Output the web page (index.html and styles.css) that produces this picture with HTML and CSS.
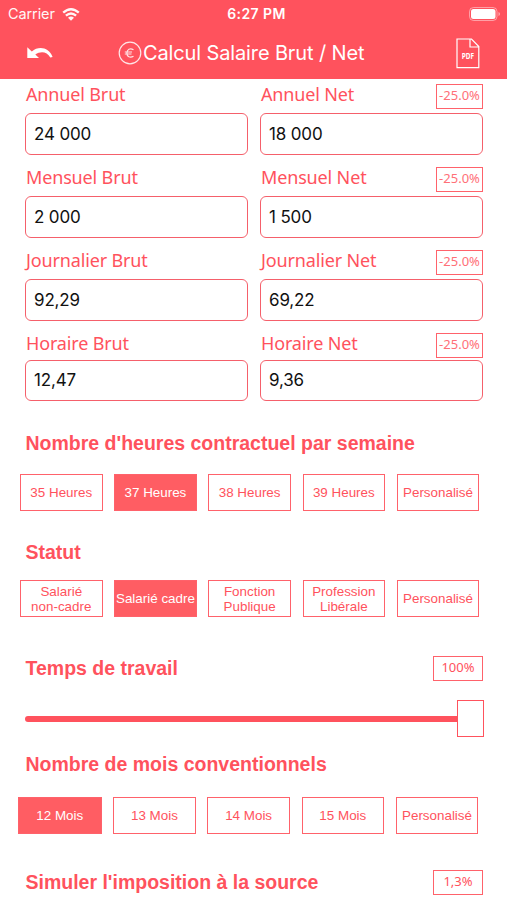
FILE: index.html
```html
<!DOCTYPE html>
<html lang="fr">
<head>
<meta charset="utf-8">
<title>Calcul Salaire Brut / Net</title>
<link rel="stylesheet" href="styles.css">
</head>
<body>
<header class="top">
  <div class="status">
    <span class="carrier">Carrier <svg class="wifi" width="18" height="13" viewBox="0 0 18 13" fill="none" stroke="#fff" stroke-width="2.3"><path d="M1.2 4.7Q9-2.3 16.8 4.7M3.9 7.7Q9 3.2 14.1 7.7"/><path d="M6 9.8Q9 7.4 12 9.8L9 12.8Z" fill="#fff" stroke="none"/></svg></span>
    <span class="time">6:27 PM</span>
    <svg class="battery" width="32" height="14" viewBox="0 0 32 14"><rect x=".5" y=".5" width="27.500" height="13" rx="4" fill="none" stroke="#fff" stroke-opacity=".45"/><rect x="2" y="2" width="24.500" height="10" rx="2.500" fill="#fff"/><path d="M29.500 5v4q1.500-.6 1.500-2t-1.500-2" fill="#fff" fill-opacity=".5"/></svg>
  </div>
  <div class="nav">
    <svg class="back" width="26" height="14" viewBox="0 0 26 14" fill="#fff"><path d="M.3 1.300V12H12L8.300 8.400C13.500 4.800 20 5.200 23.300 11.600L25.600 10.900C22 1.200 11.500-.3 4.800 5.500Z"/></svg>
    <h1 class="title"><svg width="24" height="24" viewBox="0 0 24 24" fill="none" stroke="#fff" stroke-opacity=".85"><circle cx="12" cy="12" r="10.800" stroke-width="1.200"/><path d="M15.500 8.700C12 6.700 9 8.300 8.900 12S12 17.300 15.500 15.300M6.800 11H14M6.800 13H13.500" stroke-width="1.200"/></svg><span>Calcul Salaire Brut / Net</span></h1>
    <svg class="pdf" width="24" height="31" viewBox="0 0 24 31" fill="none" stroke="#fff" stroke-width="1.200"><path d="M1 1H15.500L22.800 8.500V29.700H1ZM14 1V9H22.800"/><text x="5.700" y="21.300" class="pdf-text" textLength="12.300" lengthAdjust="spacingAndGlyphs">PDF</text></svg>
  </div>
</header>
<main>
  <section class="fields">
    <div class="field"><label>Annuel Brut</label><div class="input">24 000</div></div>
    <div class="field"><label>Annuel Net<span class="rate">-25.0%</span></label><div class="input">18 000</div></div>
    <div class="field"><label>Mensuel Brut</label><div class="input">2 000</div></div>
    <div class="field"><label>Mensuel Net<span class="rate">-25.0%</span></label><div class="input">1 500</div></div>
    <div class="field"><label>Journalier Brut</label><div class="input">92,29</div></div>
    <div class="field"><label>Journalier Net<span class="rate">-25.0%</span></label><div class="input">69,22</div></div>
    <div class="field last"><label>Horaire Brut</label><div class="input">12,47</div></div>
    <div class="field last"><label>Horaire Net<span class="rate">-25.0%</span></label><div class="input">9,36</div></div>
  </section>
  <section class="hours">
    <h2><span>Nombre d'heures contractuel par semaine</span></h2>
    <div class="options"><button>35 Heures</button><button class="on">37 Heures</button><button>38 Heures</button><button>39 Heures</button><button>Personalisé</button></div>
  </section>
  <section class="statut">
    <h2><span>Statut</span></h2>
    <div class="options"><button>Salarié<br>non-cadre</button><button class="on">Salarié cadre</button><button>Fonction<br>Publique</button><button>Profession<br>Libérale</button><button>Personalisé</button></div>
  </section>
  <section class="temps">
    <h2><span>Temps de travail</span><span class="value">100%</span></h2>
    <div class="slider"><div class="track"></div><div class="thumb"></div></div>
  </section>
  <section class="mois">
    <h2><span>Nombre de mois conventionnels</span></h2>
    <div class="options"><button class="on">12 Mois</button><button>13 Mois</button><button>14 Mois</button><button>15 Mois</button><button>Personalisé</button></div>
  </section>
  <section class="source">
    <h2><span>Simuler l'imposition à la source</span><span class="value">1,3%</span></h2>
  </section>
</main>
</body>
</html>
```
FILE: styles.css
```css
* { box-sizing: border-box; }
body { margin: 0; height: 900px; overflow: hidden; background: #fff; color: #ff525d; font-family: "Liberation Sans", sans-serif; }
svg { display: block; flex: none; }
.top { height: 79px; background: #ff525d; color: #fff; }
.status { height: 28px; display: grid; grid-template-columns: 1fr auto 1fr; align-items: center; padding: 0 6px 0 8px; font: 14.5px/28px Inter, sans-serif; }
.carrier { display: flex; align-items: center; gap: 7px; letter-spacing: -.1px; opacity: .95; }
.time { font-weight: 600; font-size: 14px; letter-spacing: .4px; margin-left: 4px; }
.battery { justify-self: end; }
.nav { height: 50px; display: grid; grid-template-columns: 90px 1fr 90px; align-items: center; }
.back { margin-left: 27px; }
.title { display: flex; align-items: center; gap: 1px; margin: 0; font: 400 20px/24px Inter, sans-serif; letter-spacing: -.13px; white-space: nowrap; }
.title svg { margin-left: 28px; }
.pdf { margin-left: 39px; }
.pdf-text { font: 700 8px "Noto Sans", sans-serif; fill: #fff; stroke: none; }
.fields { display: grid; grid-template-columns: 223px 223px; column-gap: 12px; padding-left: 25px; }
.field { height: 83px; }
.field label { display: flex; justify-content: space-between; height: 34px; padding-left: 1px; font: 18px/30px "Noto Sans", sans-serif; letter-spacing: -.15px; white-space: nowrap; }
.rate { width: 47px; height: 25px; margin-top: 5px; border: 1.5px solid #ff626b; font-size: 13px; line-height: 21px; letter-spacing: 0; text-align: center; color: #ff7078; }
.input { height: 42px; border: 1.5px solid #f5606b; border-radius: 6px; padding-left: 8px; color: #111; font: 17px/40px Inter, sans-serif; letter-spacing: -.15px; }
.last { height: 73px; }
.last label { height: 32px; }
.last .input { height: 41px; line-height: 39px; }
h2 { display: flex; justify-content: space-between; align-items: center; height: 25px; margin: 0; padding: 0 24px 0 25.5px; font-size: 19.5px; line-height: 25px; white-space: nowrap; }
.value { width: 50px; height: 25px; border: 1.5px solid #ff626b; font: 13px/21px "Noto Sans", sans-serif; text-align: center; }
.options { display: grid; grid-template-columns: repeat(5, 82.5px); column-gap: 11.7px; padding-left: 20px; }
.options button { height: 37px; padding: 0; border: 1.5px solid #ff626b; border-radius: 0; background: #fff; color: #ff525d; font: 13.4px/15px "Liberation Sans", sans-serif; white-space: nowrap; }
.options .on { background: #ff5d63; color: #fff; }
.hours { padding-top: 30px; height: 139px; }
.hours .options { padding-top: 18px; }
.statut { height: 116px; }
.statut .options { padding-top: 15px; }
.temps { height: 96px; }
.slider { display: flex; align-items: center; height: 37px; margin-top: 19px; padding-left: 25px; }
.track { width: 432px; height: 6px; border-radius: 3px 0 0 3px; background: #ff525d; }
.thumb { width: 27px; height: 37px; border: 1.5px solid #ff525d; background: #fff; }
.mois { height: 118px; }
.mois .options { grid-template-columns: 83.5px repeat(4, 82.5px); padding: 20px 0 0 18px; }
```
